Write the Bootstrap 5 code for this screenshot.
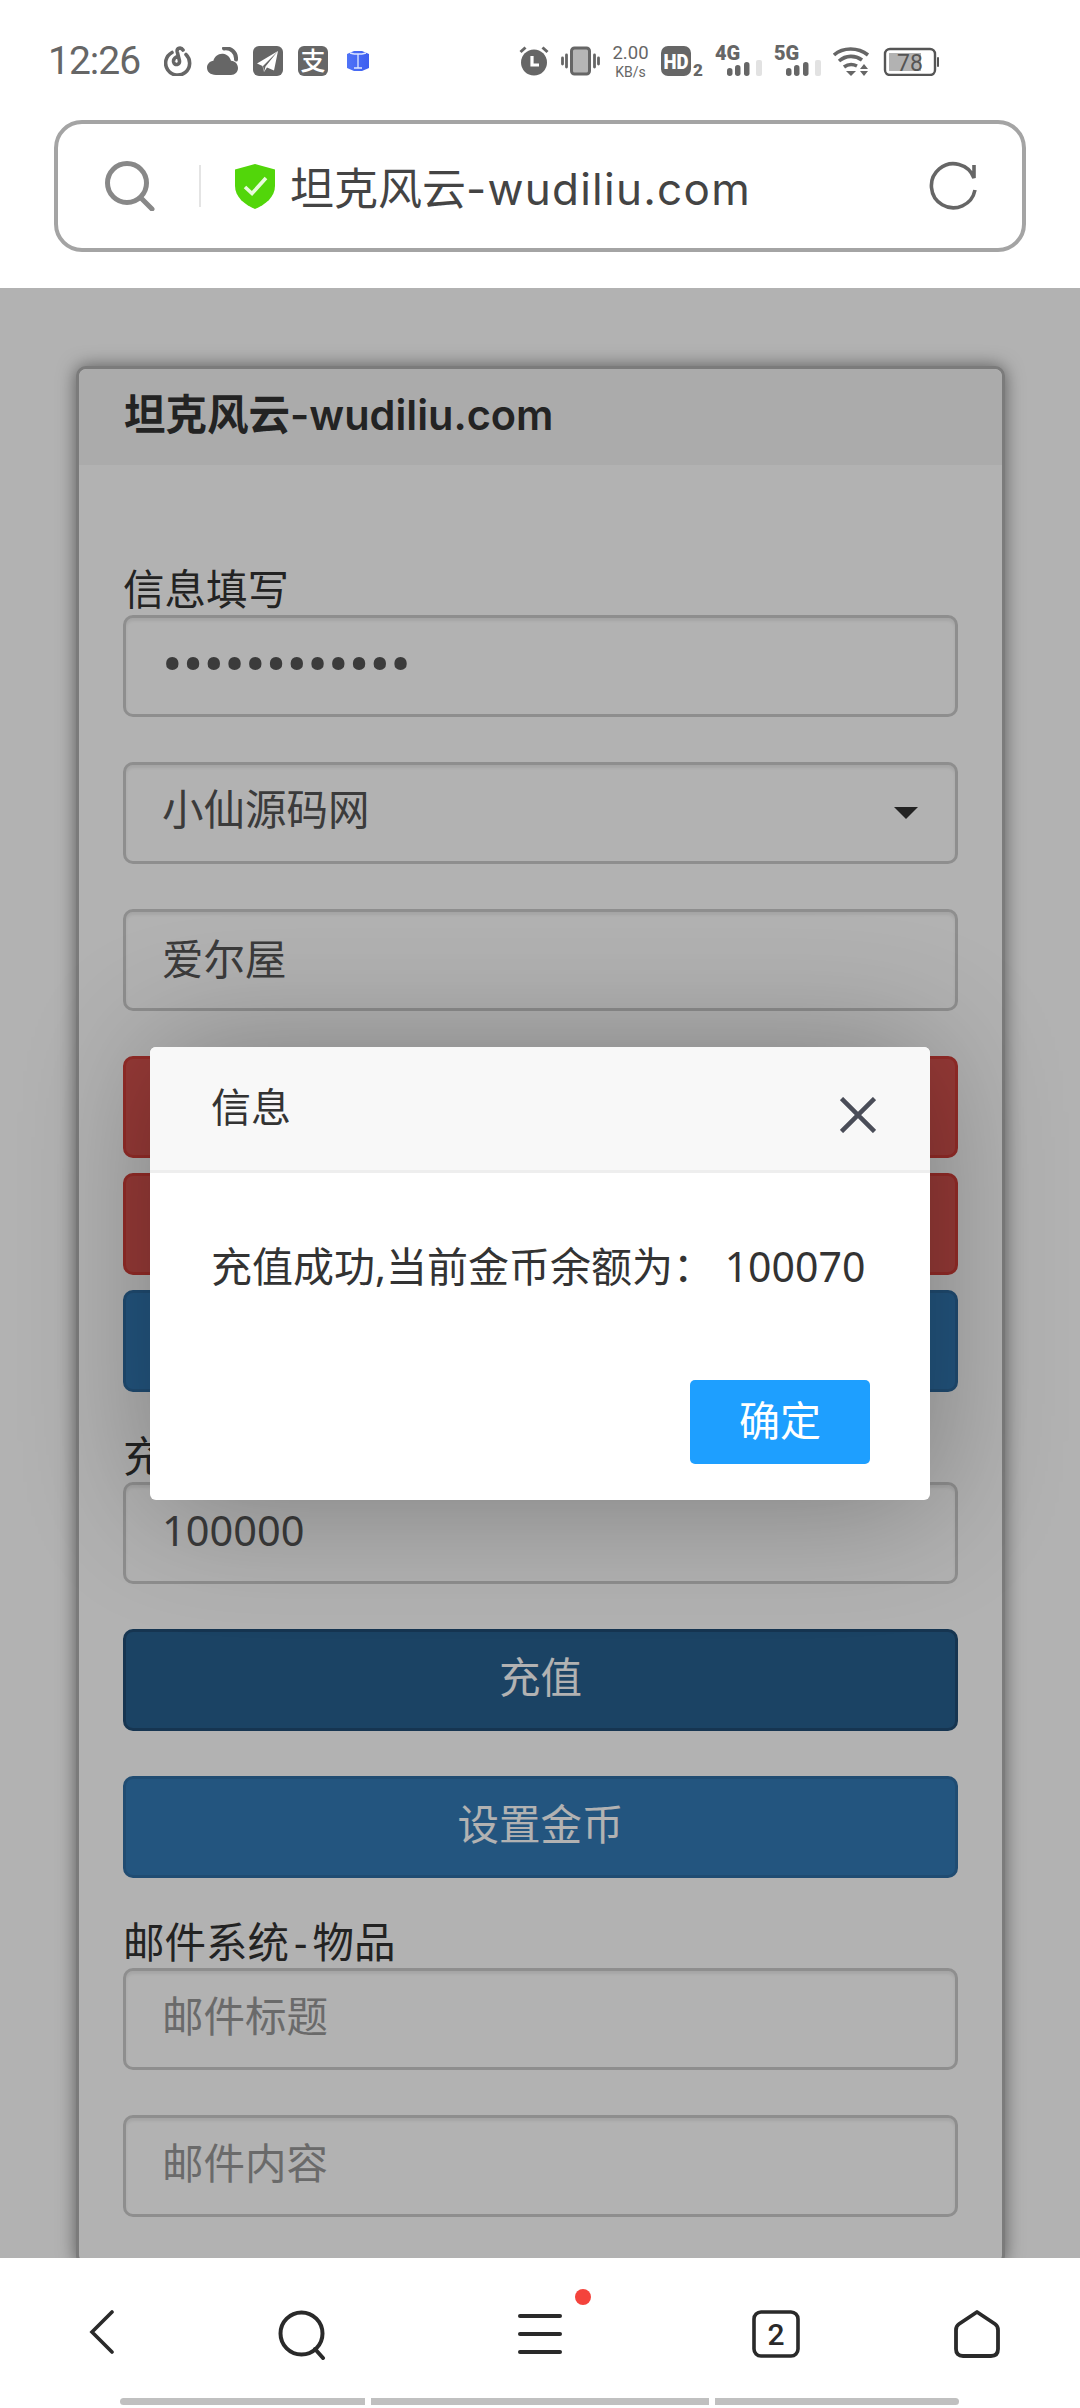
<!DOCTYPE html>
<html lang="zh">
<head>
    <meta charset="UTF-8">
    <meta name="viewport" content="width=device-width,initial-scale=1">
    <title>坦克风云-wudiliu.com</title>
    <link rel="stylesheet" href="https://cdn.jsdelivr.net/npm/bootstrap@5.3.3/dist/css/bootstrap.min.css">
    <style>
        html, body { margin: 0; background: #fff; }
        body, input, select, button { font-family: "Noto Sans", "Noto Sans CJK SC", sans-serif; }
        svg text { font-family: Roboto, "Noto Sans CJK SC", sans-serif; }
        .phone { width: 1080px; height: 2408px; overflow: hidden; position: relative; }

        /* status bar */
        .status-row { height: 120px; padding: 46px 141px 0 48px; font-family: Roboto, sans-serif; }
        .status-time { width: 92px; font-size: 39px; line-height: 30px; color: #666; margin-right: 24px; letter-spacing: -1px; white-space: nowrap; }
        .status-left { gap: 15px; }
        .status-right { gap: 12px; }
        .status-speed { width: 37px; margin-top: -1px; color: #666; text-align: center; }
        .status-speed b { display: block; font-weight: 400; font-size: 18.500px; line-height: 17px; height: 17px; }
        .status-speed i { display: block; font-style: normal; font-size: 14px; line-height: 13px; height: 13px; margin-top: 4px; }
        .status-tall { margin-top: -4px; }

        /* url bar */
        .url-wrap { height: 168px; padding: 0 54px; }
        .url-box { height: 132px; border: 4px solid #a4a4a4; border-radius: 28px; padding: 0 43px 0 47px; }
        .url-sep { width: 2px; height: 42px; background: #e4e4e4; margin: 0 34px 0 44px; }
        .url-text { font-family: Inter, "Noto Sans CJK SC", sans-serif; font-size: 44px; color: #444; margin: 6px 0 0 15px; line-height: 1; }
        .url-latin { letter-spacing: 1.250px; }

        /* web content */
        .web-view { height: 1970px; overflow: hidden; position: relative; padding-top: 78px; background: #fff; }
        .panel-box { margin-left: 76px; width: 929px; border: 3px solid #b0b0b0; border-radius: 10px; box-shadow: 0 0 18px rgba(0,0,0,.5); background: #fff; color: #333; }
        .panel-box .card-header { height: 96px; padding: 0 45px; background: #f5f5f5; border: 0; border-radius: 8px 8px 0 0; font-family: Inter, "Noto Sans CJK SC", sans-serif; font-size: 41.500px; font-weight: 600; line-height: 92px; color: #333; }
        .panel-box .card-body { padding: 92px 44px 0; }
        .fld-label { display: block; height: 58px; font-size: 41.500px; line-height: 64px; margin: 0; white-space: nowrap; }
        .dash-gap { margin: 0 5px; }
        .fld.form-control, .fld.form-select { height: 102px; border: 3px solid #ccc; border-radius: 10px; padding: 0 36px 7px; font-size: 41.500px; color: #555; box-shadow: inset 0 3px 3px rgba(0,0,0,.075); margin-bottom: 45px; }
        .fld::placeholder { color: #999; opacity: 1; }
        .fld.form-select { background-image: url("data:image/svg+xml,%3Csvg xmlns='http://www.w3.org/2000/svg' viewBox='0 0 24 12'%3E%3Cpath d='M0 0h24L12 12z' fill='%23333'/%3E%3C/svg%3E"); background-size: 24px 12px; background-position: right 37px center; }
        .fld-pass.form-control { font-family: Roboto, sans-serif; font-size: 61.500px; letter-spacing: 0; padding-bottom: 3px; }
        .wide-btn { display: block; width: 100%; height: 102px; border-radius: 10px; border-width: 3px; font-size: 41.500px; padding: 0 0 5px; --bs-btn-color: #fff; }
        .btn-a { margin-bottom: 45px; }
        .btn-b { margin-bottom: 15px; }
        .btn-last { margin-bottom: 32px; }
        .btn-red { background: #d9534f; border-color: #d43f3a; }
        .btn-blue { background: #337ab7; border-color: #2e6da4; }
        .btn-blue-on { background: #286090; border-color: #204d74; }

        /* message layer */
        .layer-shade { position: absolute; inset: 0; background: rgba(0,0,0,.3); }
        .layer-box { position: absolute; left: 150px; top: 759px; width: 780px; height: 453px; background: #fff; border-radius: 6px; box-shadow: 3px 3px 130px rgba(0,0,0,.3); color: #333; }
        .layer-head { height: 126px; background: #f8f8f8; border-bottom: 3px solid #eee; border-radius: 6px 6px 0 0; padding: 0 54px 3px 61px; font-size: 40px; }
        .layer-x { margin-top: 15px; }
        .layer-msg { height: 207px; padding: 0 0 19px 61px; font-size: 41px; white-space: pre; }
        .layer-foot { padding-right: 60px; }
        .layer-ok { width: 180px; height: 84px; padding: 0 0 3px; border: 0; border-radius: 5px; background: #1e9fff; color: #fff; font-size: 41px; }

        /* bottom bar */
        .tool-row { height: 150px; display: grid; grid-template-columns: 204px 198px 276px 196px 206px; position: relative; background: #fff; }
        .tool-cell { height: 150px; padding-top: 52px; text-align: center; position: relative; }
        .tool-dot { position: absolute; width: 16px; height: 16px; border-radius: 50%; background: #f4433c; left: 173px; top: 31px; }
        .nav-handle { position: absolute; left: 120px; top: 2398px; gap: 6px; }
        .nav-handle span { display: block; height: 7px; background: #c0c0c0; }
        .nav-handle span:first-child { width: 245px; border-radius: 4px 0 0 4px; }
        .nav-handle span:nth-child(2) { width: 338px; }
        .nav-handle span:last-child { width: 244px; border-radius: 0 4px 4px 0; }
    </style>
</head>
<body>
<div class="phone">
    <!-- status bar -->
    <div class="status-row d-flex align-items-start">
        <div class="status-time">12:26</div>
        <div class="status-left d-flex align-items-center">
            <svg width="28" height="30" viewBox="0 0 28 30" fill="none" stroke="#666" stroke-width="3.600" stroke-linecap="round"><path d="M8 6.500A12 12 0 1 0 22 8.500"/><path d="M19 4C17 .8 12.600 2 13.200 5.600L15.400 14.500C16.400 19 10.400 20 9.600 16 9 12.600 12 10.600 14.500 10.500"/></svg>
            <svg width="31" height="28" viewBox="0 0 31 28"><path d="M9 28C3 28 0 24.500 0 20.800 0 17 3 14 6.400 13.800 7.500 9.200 11.500 6.200 16 6.700 20 7.200 23 10 24 13.800 28.500 14 31 17.500 31 21 31 25 28 28 24 28Z" fill="#666"/><path d="M17 1.500C24 .5 29.500 5.500 29 12.500" fill="none" stroke="#666" stroke-width="4" stroke-linecap="round"/></svg>
            <svg width="30" height="30" viewBox="0 0 30 30"><rect width="30" height="30" rx="6" fill="#666"/><path d="M25 5 4 17.500 9.500 20 11 26 14 21.500 21 24.500Z" fill="#fff"/><path d="M25 5 10 20 11 26 12.500 20.500Z" fill="#666"/></svg>
            <svg width="30" height="30" viewBox="0 0 30 30"><rect width="30" height="30" rx="6" fill="#666"/><text x="15" y="24" font-size="25" font-weight="500" fill="#fff" text-anchor="middle">支</text></svg>
            <svg class="ms-1" width="22" height="20" viewBox="0 0 22 20"><defs><linearGradient id="cubeFill" x1="0" x2="1"><stop offset="0" stop-color="#4f73f7"/><stop offset="1" stop-color="#3d5ef0"/></linearGradient></defs><path d="M0 3 7 0H15L22 3V17L15 20H7L0 17Z" fill="url(#cubeFill)"/><path d="M7 3H15M11 3V17M7 17H15M3 2 7 3M19 2 15 3" stroke="#dfe8ff" stroke-width="1.300" fill="none"/></svg>
        </div>
        <div class="status-right d-flex align-items-start ms-auto">
            <svg width="30" height="30" viewBox="0 0 30 30"><circle cx="15" cy="16.500" r="13" fill="#666"/><path d="M13 10V19H20" stroke="#fff" stroke-width="3.200" fill="none"/><path d="M1.500 6 6.500 1.500M28.500 6 23.500 1.500" stroke="#666" stroke-width="3"/></svg>
            <svg width="39" height="30" viewBox="0 0 39 30"><rect x="10.500" y="2" width="18" height="26" rx="3" fill="#b5b5b5" stroke="#666" stroke-width="3"/><path d="M5.500 9V21M1.500 12V18M33.500 9V21M37.500 12V18" stroke="#666" stroke-width="2.800" stroke-linecap="round"/></svg>
            <div class="status-speed"><b>2.00</b><i>KB/s</i></div>
            <svg width="42" height="36" viewBox="0 0 42 36"><rect width="30" height="30" rx="7" fill="#666"/><text x="15" y="22.500" font-size="21" font-weight="900" fill="#fff" text-anchor="middle" textLength="25" lengthAdjust="spacingAndGlyphs">HD</text><text x="32" y="30" font-size="17" font-weight="900" fill="#666">2</text></svg>
            <svg class="status-tall" width="47" height="34" viewBox="0 -4 47 34"><text x="0" y="14" font-size="20" font-weight="900" fill="#666">4G</text><g fill="#666"><rect x="12" y="22" width="5.500" height="8" rx="2.700"/><rect x="20" y="19" width="5.500" height="11" rx="2.700"/><rect x="29" y="16" width="5.500" height="14" rx="2.700"/></g><rect x="41" y="14" width="6" height="16" rx="2" fill="#e2e2e2"/></svg>
            <svg class="status-tall" width="47" height="34" viewBox="0 -4 47 34"><text x="0" y="14" font-size="20" font-weight="900" fill="#666">5G</text><g fill="#666"><rect x="12" y="22" width="5.500" height="8" rx="2.700"/><rect x="20" y="19" width="5.500" height="11" rx="2.700"/><rect x="29" y="16" width="5.500" height="14" rx="2.700"/></g><rect x="41" y="14" width="6" height="16" rx="2" fill="#e2e2e2"/></svg>
            <svg width="38" height="30" viewBox="0 0 38 30" fill="none" stroke="#666" stroke-width="3.600"><path d="M1 9C10 1 25 1 35 9"/><path d="M6 15C13 9 22 9 29 14"/><path d="M11 21C15 18 20 18 24 20"/><path d="M13 25H23L18 30Z" fill="#666" stroke="none"/><path d="M31 18 35 23H27ZM27 25H35L31 30Z" fill="#666" stroke="none"/></svg>
            <svg width="56" height="30" viewBox="0 0 56 30"><rect x="2" y="3" width="50" height="26" rx="5" fill="none" stroke="#555" stroke-width="2.400"/><rect x="6" y="7" width="32" height="18" fill="#b2b2b2"/><text x="27" y="25" font-size="23" fill="#555" text-anchor="middle">78</text><rect x="54" y="11" width="2" height="10" rx="1" fill="#555"/></svg>
        </div>
    </div>

    <!-- address bar -->
    <div class="url-wrap">
        <div class="url-box d-flex align-items-center">
            <svg width="50" height="50" viewBox="0 0 50 50" fill="none" stroke="#888" stroke-width="5" stroke-linecap="round"><circle cx="22" cy="22" r="19.500"/><path d="M36 37 47 48"/></svg>
            <div class="url-sep"></div>
            <svg width="40" height="45" viewBox="0 0 40 45"><path d="M20 0 40 5.500V22C40 33 30 41 20 45 10 41 0 33 0 22V5.500Z" fill="#52d60a"/><path d="M10 23 17 29.500 31 14" fill="none" stroke="#e8fbdc" stroke-width="3.600"/></svg>
            <div class="url-text">坦克风云<span class="url-latin">-wudiliu.com</span></div>
            <svg class="ms-auto" width="50" height="50" viewBox="0 0 50 50" fill="none" stroke="#666" stroke-width="3.600"><path d="M46 29A22 22 0 1 1 45 17V4"/></svg>
        </div>
    </div>

    <!-- page in the browser -->
    <div class="web-view">
        <div class="card panel-box">
            <div class="card-header">坦克风云-wudiliu.com</div>
            <div class="card-body">
                <label class="fld-label">信息填写</label>
                <input class="form-control fld fld-pass" type="password" value="123456789012">
                <select class="form-select fld"><option>小仙源码网</option></select>
                <input class="form-control fld" type="text" value="爱尔屋">
                <button class="btn wide-btn btn-red btn-b"></button>
                <button class="btn wide-btn btn-red btn-b"></button>
                <button class="btn wide-btn btn-blue btn-last"></button>
                <label class="fld-label">充值金币</label>
                <input class="form-control fld" type="text" value="100000">
                <button class="btn wide-btn btn-blue-on btn-a">充值</button>
                <button class="btn wide-btn btn-blue btn-last">设置金币</button>
                <label class="fld-label">邮件系统<span class="dash-gap">-</span>物品</label>
                <input class="form-control fld" type="text" placeholder="邮件标题">
                <input class="form-control fld" type="text" placeholder="邮件内容">
            </div>
        </div>
        <div class="layer-shade"></div>
        <div class="layer-box">
            <div class="layer-head d-flex align-items-center justify-content-between">
                <span>信息</span>
                <svg class="layer-x" width="36" height="36" viewBox="0 0 36 36" stroke="#4a4d58" stroke-width="4.500"><path d="M1.500 1.500 34.500 34.500M34.500 1.500 1.500 34.500"/></svg>
            </div>
            <div class="layer-msg d-flex align-items-center">充值成功,当前金币余额为： 100070</div>
            <div class="layer-foot d-flex justify-content-end"><button class="btn layer-ok">确定</button></div>
        </div>
    </div>

    <!-- browser toolbar -->
    <div class="tool-row">
        <div class="tool-cell"><svg width="26" height="44" viewBox="0 0 26 44" fill="none" stroke="#2a2a2a" stroke-width="3.600" stroke-linecap="round"><path d="M23 2 3 22 23 42"/></svg></div>
        <div class="tool-cell"><svg width="50" height="50" viewBox="0 0 50 50" fill="none" stroke="#2a2a2a" stroke-width="4" stroke-linecap="round"><circle cx="23.500" cy="23.500" r="21"/><path d="M37 39 45 48"/></svg></div>
        <div class="tool-cell">
            <svg width="44" height="40" viewBox="0 0 44 40" class="mt-1" fill="#2a2a2a"><rect width="44" height="4" rx="2"/><rect y="18" width="44" height="4" rx="2"/><rect y="36" width="44" height="4" rx="2"/></svg>
            <span class="tool-dot"></span>
        </div>
        <div class="tool-cell"><svg width="48" height="48" viewBox="0 0 48 48"><rect x="2" y="2" width="44" height="44" rx="7" fill="none" stroke="#2a2a2a" stroke-width="3.600"/><text x="24" y="35" font-size="30" font-weight="500" fill="#2a2a2a" text-anchor="middle">2</text></svg></div>
        <div class="tool-cell"><svg width="46" height="48" viewBox="0 0 46 48" fill="none" stroke="#2a2a2a" stroke-width="3.800" stroke-linejoin="round"><path d="M23 2 41 14Q44 16 44 20V39Q44 46 37 46H9Q2 46 2 39V20Q2 16 5 14Z"/></svg></div>
    </div>
    <div class="nav-handle d-flex"><span></span><span></span><span></span></div>
</div>
<script src="https://cdn.jsdelivr.net/npm/bootstrap@5.3.3/dist/js/bootstrap.bundle.min.js"></script>
</body>
</html>
